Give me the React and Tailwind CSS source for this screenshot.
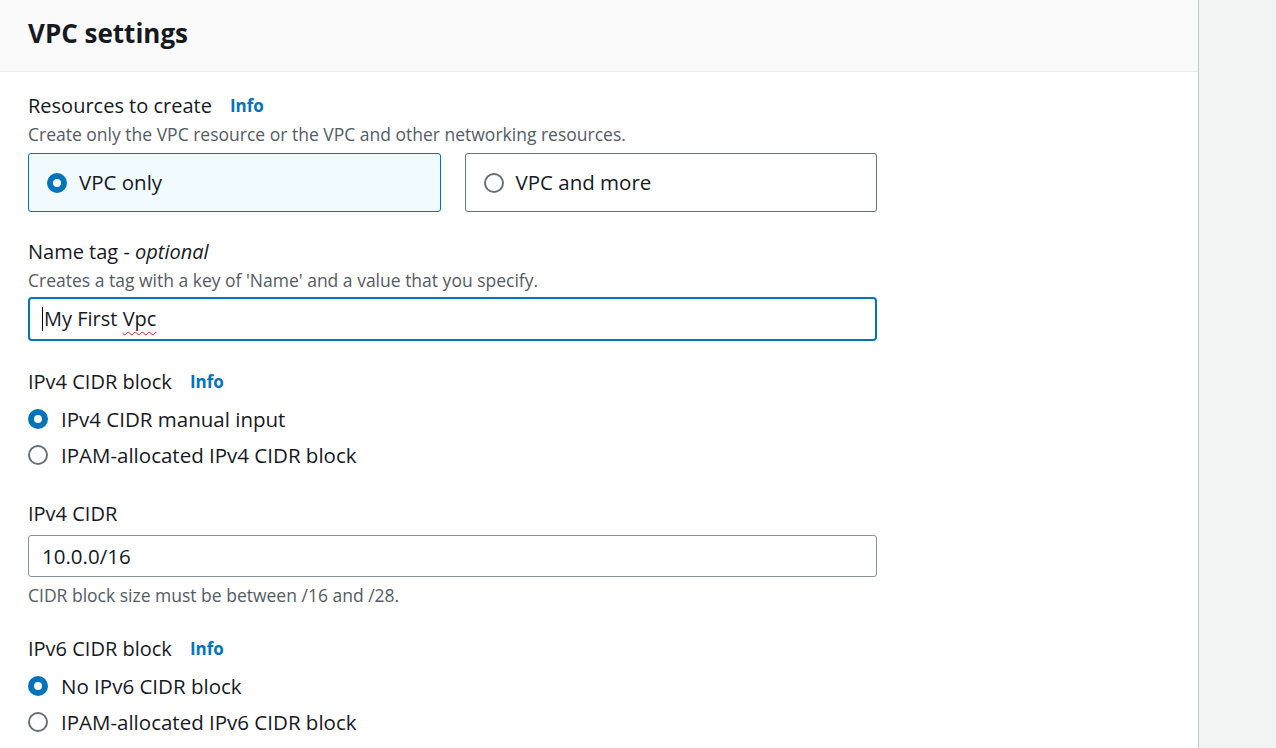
import React from 'react';

const Radio = ({ checked }) => (
  <span
    className={
      checked
        ? 'inline-block w-[20px] h-[20px] rounded-full border-[6px] border-[#0073bb] bg-white shrink-0'
        : 'inline-block w-[20px] h-[20px] rounded-full border-2 border-[#687078] bg-white shrink-0'
    }
  />
);

const Info = () => (
  <span className="ml-[18px] text-[17px] font-bold text-[#0073bb]">Info</span>
);

const Label = ({ children, info }) => (
  <div className="h-[28px] flex items-center text-[20px] text-[#16191f]">
    <span>{children}</span>
    {info && <Info />}
  </div>
);

const Desc = ({ children, className = '' }) => (
  <div className={`h-[28px] flex items-center text-[17.5px] text-[#545b64] ${className}`}>{children}</div>
);

const RadioRow = ({ checked, children }) => (
  <div className="h-[36px] flex items-center gap-[13px] text-[20.5px] text-[#16191f]">
    <Radio checked={checked} />
    <span>{children}</span>
  </div>
);

const App = () => {
  return (
    <div
      className="w-[1276px] h-[748px] overflow-hidden flex bg-[#f2f3f3]"
      style={{ fontFamily: '"Open Sans", "Noto Sans", Arial, sans-serif' }}
    >
      <div className="w-[1199px] h-full bg-white border-r border-[#c4c8c8] flex flex-col">
        {/* Header */}
        <div className="h-[72px] bg-[#fafafa] border-b border-[#eaeded] flex items-center px-[28px] shrink-0">
          <h2 className="text-[26px] font-bold text-[#16191f] -mt-[4px]">VPC settings</h2>
        </div>

        {/* Body */}
        <div className="pl-[28px] pt-[20px] w-[877px]">
          <Label info>Resources to create</Label>
          <Desc className="h-[26px]">Create only the VPC resource or the VPC and other networking resources.</Desc>

          <div className="mt-[5px] grid grid-cols-2 gap-[24px]">
            <div className="h-[59px] rounded-[3px] border border-[#0073bb] bg-[#f1faff] flex items-center gap-[12px] pl-[18px] text-[20.5px] text-[#16191f]">
              <Radio checked />
              <span>VPC only</span>
            </div>
            <div className="h-[59px] rounded-[3px] border border-[#687078] bg-white flex items-center gap-[12px] pl-[18px] text-[20.5px] text-[#16191f]">
              <Radio />
              <span>VPC and more</span>
            </div>
          </div>

          <div className="mt-[26px]">
            <Label>
              Name tag - <i>optional</i>
            </Label>
            <Desc>Creates a tag with a key of 'Name' and a value that you specify.</Desc>
            <div className="mt-[3px] h-[44px] rounded-[4px] border-2 border-[#0073bb] flex items-center pl-[12px] text-[20px] text-[#16191f]">
              <span className="w-[1px] h-[24px] bg-black mr-[1px]" />
              <span>
                My First{' '}
                <span className="underline decoration-wavy decoration-[#e02020] decoration-1 underline-offset-[5px]">Vpc</span>
              </span>
            </div>
          </div>

          <div className="mt-[27px]">
            <Label info>IPv4 CIDR block</Label>
            <div className="mt-[5px]">
              <RadioRow checked>IPv4 CIDR manual input</RadioRow>
              <RadioRow>IPAM-allocated IPv4 CIDR block</RadioRow>
            </div>
          </div>

          <div className="mt-[27px]">
            <Label>IPv4 CIDR</Label>
            <div className="mt-[7px] h-[42px] rounded-[3px] border border-[#879596] flex items-center pl-[13px] text-[20.5px] text-[#16191f]">
              10.0.0/16
            </div>
            <Desc className="mt-[4px]">CIDR block size must be between /16 and /28.</Desc>
          </div>

          <div className="mt-[26px]">
            <Label info>IPv6 CIDR block</Label>
            <div className="mt-[5px]">
              <RadioRow checked>No IPv6 CIDR block</RadioRow>
              <RadioRow>IPAM-allocated IPv6 CIDR block</RadioRow>
            </div>
          </div>
        </div>
      </div>
    </div>
  );
};

export default App;
